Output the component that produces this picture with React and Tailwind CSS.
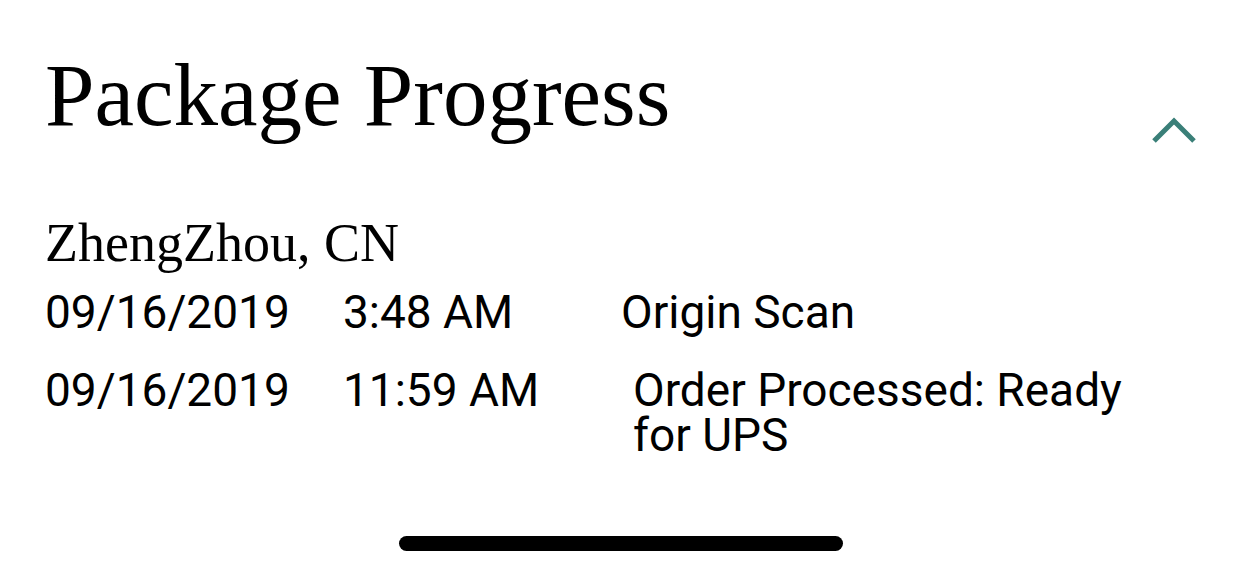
import React from "react";

const events = [
  { date: "09/16/2019", time: "3:48 AM", status: "Origin Scan", timeW: "w-[278px]" },
  { date: "09/16/2019", time: "11:59 AM", status: "Order Processed: Ready for UPS", timeW: "w-[290px]" },
];

const ChevronUp = () => (
  <svg width="46" height="28" viewBox="0 0 46 28" className="mt-[66px]">
    <polyline points="3,24 23,4 43,24" fill="none" stroke="#3a7f78" strokeWidth="5" />
  </svg>
);

const EventRow = ({ event }) => (
  <div className="flex items-start text-[46px] leading-[45px] text-black" style={{ fontFamily: "Roboto, 'Liberation Sans', sans-serif" }}>
    <div className="w-[298px] shrink-0">{event.date}</div>
    <div className={`${event.timeW} shrink-0`}>{event.time}</div>
    <div className="w-[520px]">{event.status}</div>
  </div>
);

const App = () => {
  return (
    <div className="w-[1241px] h-[574px] bg-white flex flex-col pl-[45px] pr-[44px] pt-[51px] overflow-hidden">
      <div className="flex justify-between items-start">
        <h1 className="text-[89px] leading-none text-black" style={{ fontFamily: "'Liberation Serif', serif" }}>
          Package Progress
        </h1>
        <ChevronUp />
      </div>

      <h2 className="mt-[71px] text-[54px] leading-none text-black" style={{ fontFamily: "'Liberation Serif', serif" }}>
        ZhengZhou, CN
      </h2>

      <div className="mt-[20px] flex flex-col gap-[33px]">
        {events.map((event, index) => (
          <EventRow key={index} event={event} />
        ))}
      </div>

      <div className="flex-1" />
      <div className="flex justify-center mb-[23px] -ml-[45px] -mr-[44px]">
        <div className="w-[444px] h-[15px] rounded-full bg-black" />
      </div>
    </div>
  );
};

export default App;
